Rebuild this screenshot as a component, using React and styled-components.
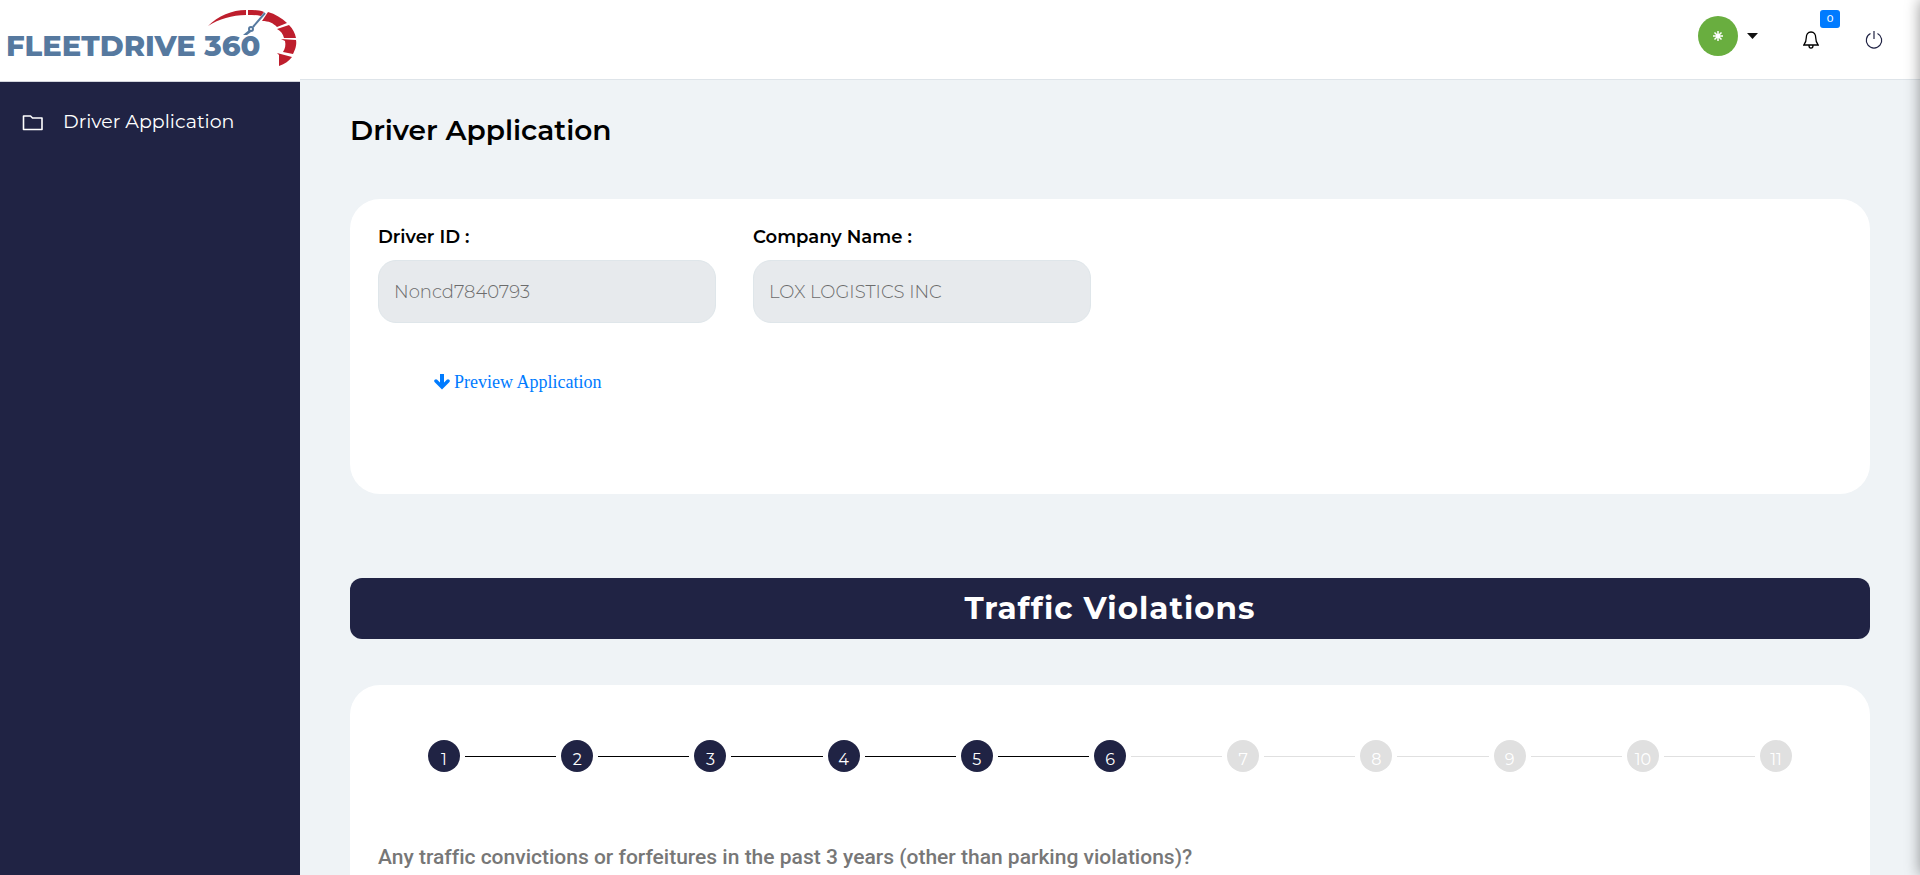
import React from "react";
import styled, { createGlobalStyle } from "styled-components";

const GlobalStyle = createGlobalStyle`
  *, *::before, *::after { box-sizing: border-box; }
  body {
    margin: 0;
    background: #eff3f6;
    color: #000;
    font-family: Montserrat, Inter, sans-serif;
    overflow: hidden;
  }
  h1, h2, p, ol { margin: 0; padding: 0; }
`;

const Page = styled.div`
  display: grid;
  grid-template-columns: 300px minmax(0, 1fr);
  height: 100vh;
  overflow: hidden;
  position: relative;
`;

const SideColumn = styled.div`
  display: flex;
  flex-direction: column;
  background: #fff;
`;

const Brand = styled.a`
  display: block;
  flex: none;
  height: 82px;
  border-bottom: 1px solid #d3d5dd;
`;

const SideNav = styled.nav`
  flex: 1;
  background: #202344;
  padding: 28px 22px;
`;

const NavLink = styled.a`
  display: flex;
  align-items: center;
  gap: 20px;
  color: #fff;
  font-size: 19px;
  line-height: 24px;
  text-decoration: none;
`;

const MainColumn = styled.div`
  min-width: 0;
`;

const TopBar = styled.header`
  display: flex;
  justify-content: flex-end;
  align-items: center;
  height: 80px;
  padding: 0 37px 8px 0;
  background: #fff;
  border-bottom: 1px solid #dee4e9;
`;

const BarButton = styled.button`
  display: flex;
  align-items: center;
  position: relative;
  padding: ${(p) => (p.$low ? 8 : 0)}px 0 0;
  border: 0;
  background: none;
  font: inherit;
  color: #000;
  cursor: pointer;
  gap: 9px;
  margin-left: ${(p) => p.$gap || 0}px;
`;

const Avatar = styled.span`
  display: flex;
  align-items: center;
  justify-content: center;
  width: 40px;
  height: 40px;
  border-radius: 50%;
  background: #69ae3f;
`;

const Badge = styled.span`
  position: absolute;
  left: 17px;
  bottom: 21px;
  width: 20px;
  height: 18px;
  border-radius: 3px;
  background: #007bff;
  color: #fff;
  font-size: 10px;
  font-weight: 500;
  line-height: 18px;
  text-align: center;
`;

const Content = styled.main`
  padding: 30px 50px 0;
`;

const PageTitle = styled.h1`
  font-size: 28px;
  font-weight: 600;
  line-height: 40px;
`;

const Card = styled.section`
  background: #fff;
  border-radius: 30px;
  padding: 28px;
  margin-top: ${(p) => p.$top}px;
  min-height: ${(p) => p.$min}px;
`;

const FieldRow = styled.div`
  display: flex;
  gap: 37px;
`;

const Field = styled.div`
  display: flex;
  flex-direction: column;
  width: 338px;
`;

const Label = styled.label`
  font-size: 18px;
  font-weight: 600;
  line-height: 20px;
  margin-bottom: 13px;
`;

const TextInput = styled.input`
  height: 63px;
  border: 1px solid #dfe6ea;
  border-radius: 18px;
  background: #e7eaed;
  padding: 0 15px;
  color: #6c6c6c;
  font: 300 18px Montserrat, Inter, sans-serif;
`;

const PreviewLink = styled.a`
  display: inline-flex;
  align-items: center;
  gap: 4px;
  margin: 47px 0 0 56px;
  color: #007bff;
  font: 18px/24px "Liberation Serif", serif;
  text-decoration: none;
`;

const Banner = styled.h2`
  margin-top: 84px;
  height: 61px;
  border-radius: 12px;
  background: #202344;
  color: #fff;
  font-size: 31px;
  font-weight: 700;
  line-height: 60px;
  letter-spacing: 1px;
  text-align: center;
`;

const Steps = styled.ol`
  display: flex;
  align-items: center;
  list-style: none;
  padding: 27px 50px 0;
`;

const Step = styled.li`
  display: flex;
  align-items: center;
  flex: ${(p) => (p.$last ? "none" : "1")};
  &::after {
    content: "";
    display: ${(p) => (p.$last ? "none" : "block")};
    flex: 1;
    height: 1px;
    margin: 0 5px;
    background: ${(p) => (p.$reached ? "#000" : "#e0e0e0")};
  }
`;

const StepDot = styled.span`
  width: 32px;
  height: 32px;
  padding-top: 4px;
  border-radius: 50%;
  background: ${(p) => (p.$done ? "#202344" : "#e0e0e0")};
  color: #fff;
  font-size: 16px;
  line-height: 32px;
  text-align: center;
`;

const Question = styled.p`
  margin-top: 72px;
  color: #777;
  font: 500 21px/26px Roboto, sans-serif;
  font-variant-ligatures: none;
`;

const EdgeShadow = styled.div`
  position: absolute;
  top: 0;
  bottom: 0;
  left: 100%;
  width: 20px;
  box-shadow: 0 0 15px rgba(0, 0, 0, 0.4);
`;

const LogoText = styled.text`
  font: 800 29px Montserrat, "DejaVu Sans", sans-serif;
  fill: #56799f;
`;

function Logo() {
  return (
    <svg width="300" height="81" viewBox="0 0 300 81" role="img" aria-label="FleetDrive 360">
      <LogoText x="6" y="56">FLEETDRIVE 360</LogoText>
      <g fill="#be1e2d">
        <path d="M208 26C218 16 232 10 246 10V15C232 15 219 19 208 26Z" />
        <path d="M248 10C254 10 259 10 264 12L261 16C257 15 252 15 248 15Z" />
        <path d="M268 12C275 14 282 18 287 23L277 27C273 23 269 21 262 21Z" />
        <path d="M289 25C293 29 295 33 296 38H284C283 34 281 31 277 29Z" />
        <path d="M296 40C297 45 295 50 293 54L283 52C285 49 286 45 285 41L281 39Z" />
        <path d="M292 57C289 61 285 64 279 66V55L277 53Z" />
      </g>
      <path d="M265 13L253 27" stroke="#56799f" strokeWidth="2" />
      <circle cx="251" cy="29" r="2" fill="#fff" stroke="#56799f" strokeWidth="2" />
      <path d="M249 30L243 35H247L251 32Z" fill="#56799f" />
    </svg>
  );
}

const FolderIcon = () => (
  <svg width="21" height="17" viewBox="0 0 21 17" fill="none" stroke="#fff" strokeWidth="1.6">
    <path d="M1.500 15.500V2H8.500L10.500 4H20V15.500Z" strokeLinejoin="round" />
  </svg>
);

const StarIcon = () => (
  <svg width="10" height="10" viewBox="0 0 10 10" stroke="#fff" strokeWidth="1.5">
    <path d="M5 0V10M0 5H10M1.500 1.500L8.500 8.500M8.500 1.500L1.500 8.500" />
    <circle cx="5" cy="5" r="2" fill="#fff" stroke="none" />
  </svg>
);

const CaretIcon = () => (
  <svg width="11" height="6" viewBox="0 0 11 6">
    <path d="M0 0H11L5.500 6Z" fill="#111" />
  </svg>
);

const BellIcon = () => (
  <svg width="16" height="18" viewBox="0 0 16 18" fill="none" stroke="#000" strokeWidth="1.3">
    <path d="M8 1C4.800 1 3.300 3.500 3.300 6.500C3.300 11 2 12.500.8 14H15.200C14 12.500 12.700 11 12.700 6.500C12.700 3.500 11.200 1 8 1ZM6 14.500C6 18 10 18 10 14.500" />
  </svg>
);

const PowerIcon = () => (
  <svg width="18" height="19" viewBox="0 0 18 19" fill="none" stroke="#202344" strokeWidth="1.2">
    <path d="M9 1V9M5.500 3.500A7.700 7.700 0 1 0 12.500 3.500" />
  </svg>
);

const ArrowIcon = () => (
  <svg width="16" height="16" viewBox="0 0 16 16" fill="none" stroke="#007bff">
    <path d="M8 0V12" strokeWidth="4" />
    <path d="M2 7L8 13L14 7" strokeWidth="3.500" strokeLinecap="round" />
  </svg>
);

const steps = [1, 2, 3, 4, 5, 6, 7, 8, 9, 10, 11];
const current = 6;

export default function App() {
  return (
    <Page>
      <GlobalStyle />
      <SideColumn>
        <Brand href="#home"><Logo /></Brand>
        <SideNav>
          <NavLink href="#application">
            <FolderIcon />
            Driver Application
          </NavLink>
        </SideNav>
      </SideColumn>
      <MainColumn>
        <TopBar>
          <BarButton type="button" aria-label="Account">
            <Avatar><StarIcon /></Avatar>
            <CaretIcon />
          </BarButton>
          <BarButton type="button" aria-label="Notifications" $gap={45} $low>
            <BellIcon />
            <Badge>0</Badge>
          </BarButton>
          <BarButton type="button" aria-label="Log out" $gap={46} $low>
            <PowerIcon />
          </BarButton>
        </TopBar>
        <Content>
          <PageTitle>Driver Application</PageTitle>
          <Card $top={49} $min={295}>
            <FieldRow>
              <Field>
                <Label htmlFor="driver-id">Driver ID :</Label>
                <TextInput id="driver-id" defaultValue="Noncd7840793" readOnly />
              </Field>
              <Field>
                <Label htmlFor="company">Company Name :</Label>
                <TextInput id="company" defaultValue="LOX LOGISTICS INC" readOnly />
              </Field>
            </FieldRow>
            <PreviewLink href="#preview">
              <ArrowIcon />
              Preview Application
            </PreviewLink>
          </Card>
          <Banner>Traffic Violations</Banner>
          <Card $top={46} $min={400}>
            <Steps>
              {steps.map((n) => (
                <Step key={n} $last={n === steps.length} $reached={n < current}>
                  <StepDot $done={n <= current}>{n}</StepDot>
                </Step>
              ))}
            </Steps>
            <Question>Any traffic convictions or forfeitures in the past 3 years (other than parking violations)?</Question>
          </Card>
        </Content>
      </MainColumn>
      <EdgeShadow />
    </Page>
  );
}
